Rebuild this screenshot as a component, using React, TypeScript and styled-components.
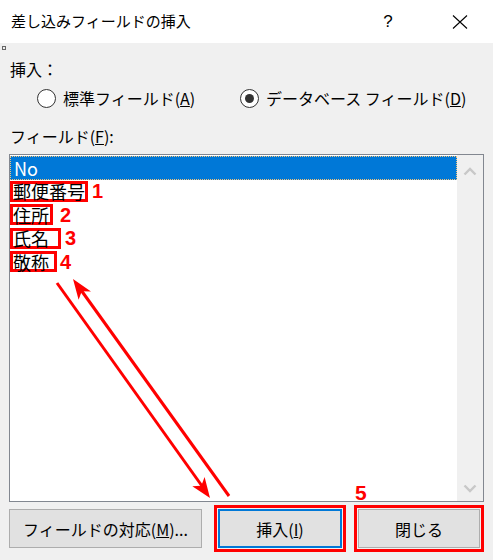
import React from 'react';
import styled, { createGlobalStyle } from 'styled-components';

const GlobalStyle = createGlobalStyle`
  html, body {
    margin: 0;
    padding: 0;
    background: #f0f0f0;
  }
  body {
    font-family: "Noto Sans CJK JP", "Noto Sans", sans-serif;
    color: #000000;
  }
`;

const fields = [
  { name: '郵便番号', num: '1', pad: 0, gap: 4 },
  { name: '住所', num: '2', pad: 1, gap: 7 },
  { name: '氏名', num: '3', pad: 9, gap: 4 },
  { name: '敬称', num: '4', pad: 5, gap: 3 },
];

export default function App() {
  return (
    <Window>
      <GlobalStyle />
      <TitleBar>
        <Title>差し込みフィールドの挿入</Title>
        <CaptionButton>?</CaptionButton>
        <CaptionButton>
          <svg width="16" height="14" viewBox="0 0 16 14">
            <path d="M1 0.5 L15 13.5 M15 0.5 L1 13.5" stroke="#000" strokeWidth="1.1" fill="none" />
          </svg>
        </CaptionButton>
      </TitleBar>

      <Content>
        <TinyDot />
        <Heading>挿入：</Heading>
        <RadioRow>
          <RadioOption width={203}>
            <RadioCircle />
            <span>
              標準フィールド(<u>A</u>)
            </span>
          </RadioOption>
          <RadioOption>
            <RadioCircle checked />
            <span>
              データベース フィールド(<u>D</u>)
            </span>
          </RadioOption>
        </RadioRow>

        <Heading>
          フィールド(<u>F</u>):
        </Heading>

        <ListBox>
          <Items>
            <Row selected>No</Row>
            {fields.map((f) => (
              <Row key={f.name}>
                <Mark pad={f.pad}>{f.name}</Mark>
                <Num gap={f.gap}>{f.num}</Num>
              </Row>
            ))}
          </Items>
          <ScrollBar>
            <svg width="14" height="9" viewBox="0 0 14 9">
              <path d="M1.5 7.5 L7 2 L12.5 7.5" stroke="#c8c8c8" strokeWidth="2.4" fill="none" />
            </svg>
            <svg width="14" height="9" viewBox="0 0 14 9">
              <path d="M1.5 1.5 L7 7 L12.5 1.5" stroke="#c8c8c8" strokeWidth="2.4" fill="none" />
            </svg>
          </ScrollBar>
        </ListBox>

        <ButtonRow>
          <Button width={194}>
            フィールドの対応(<u>M</u>)...
          </Button>
          <Highlight gap={12}>
            <Button width={124} primary>
              挿入(<u>I</u>)
            </Button>
          </Highlight>
          <Highlight gap={8}>
            <Button width={122}>閉じる</Button>
          </Highlight>
        </ButtonRow>
      </Content>

      <StepFive>5</StepFive>

      <Arrows width="493" height="560" viewBox="0 0 493 560">
        <line x1="57" y1="283" x2="202" y2="486" stroke="#ff0000" strokeWidth="3" />
        <polygon points="210,498 192.3,486.3 201.3,485.8 204.6,477.1" fill="#ff0000" />
        <line x1="229" y1="496" x2="81" y2="290" stroke="#ff0000" strokeWidth="3" />
        <polygon points="73,279 91,291.5 81.8,291.2 78.6,299.8" fill="#ff0000" />
      </Arrows>
    </Window>
  );
}

const Window = styled.div`
  position: relative;
  width: 493px;
  height: 560px;
  background: #f0f0f0;
  overflow: hidden;
`;

const TitleBar = styled.div`
  height: 43px;
  display: flex;
  align-items: center;
  padding: 0 10px 0 11px;
  background: #ffffff;
  box-sizing: border-box;
`;

const Title = styled.div`
  flex: 1;
  font-size: 15px;
  line-height: 20px;
  padding-bottom: 1px;
`;

const CaptionButton = styled.div`
  width: 46px;
  height: 43px;
  display: flex;
  align-items: center;
  justify-content: center;
  font-family: "Liberation Sans", sans-serif;
  font-size: 17px;
  & + & {
    margin-left: 26px;
  }
`;

const Content = styled.div`
  position: relative;
  display: flow-root;
  padding: 0 9px;
`;

const TinyDot = styled.div`
  position: absolute;
  left: 2px;
  top: 3px;
  width: 2px;
  height: 2px;
  border: 1px solid #666666;
`;

const Heading = styled.div`
  margin-top: 14px;
  height: 24px;
  padding-left: 1px;
  font-size: 16px;
  line-height: 24px;
`;

const RadioRow = styled.div`
  margin-top: 5px;
  height: 24px;
  padding-left: 28px;
  display: flex;
  align-items: center;
`;

const RadioOption = styled.label<{ width?: number }>`
  display: flex;
  align-items: center;
  gap: 7px;
  width: ${(p) => (p.width ? `${p.width}px` : 'auto')};
  font-size: 16px;
  line-height: 24px;
`;

const RadioCircle = styled.span<{ checked?: boolean }>`
  width: 19px;
  height: 19px;
  box-sizing: border-box;
  border: 1px solid #333333;
  border-radius: 50%;
  background: #ffffff;
  display: flex;
  align-items: center;
  justify-content: center;

  &::after {
    content: '';
    display: ${(p) => (p.checked ? 'block' : 'none')};
    width: 9px;
    height: 9px;
    border-radius: 50%;
    background: #333333;
  }
`;

const ListBox = styled.div`
  margin-top: 6px;
  width: 475px;
  height: 348px;
  box-sizing: border-box;
  border: 1px solid #828790;
  background: #ffffff;
  display: flex;
`;

const Items = styled.div`
  flex: 1;
  padding-top: 1px;
`;

const Row = styled.div<{ selected?: boolean }>`
  height: 23.5px;
  box-sizing: border-box;
  display: flex;
  align-items: center;
  padding-left: 3px;
  font-size: 18px;
  line-height: 1;
  color: ${(p) => (p.selected ? '#ffffff' : '#000000')};
  background: ${(p) => (p.selected ? '#0078d7' : 'transparent')};
  border: 1px dotted ${(p) => (p.selected ? '#f2c27a' : 'transparent')};
`;

const Mark = styled.span<{ pad: number }>`
  display: inline-flex;
  align-items: center;
  height: 21px;
  box-sizing: border-box;
  margin-left: -4px;
  padding-right: ${(p) => p.pad}px;
  border: 3px solid #ff0000;
`;

const Num = styled.span<{ gap: number }>`
  margin-left: ${(p) => p.gap}px;
  font-family: "Liberation Sans", Arial, sans-serif;
  font-weight: 700;
  font-size: 20px;
  color: #ff0000;
`;

const ScrollBar = styled.div`
  width: 26px;
  background: #f0f0f0;
  display: flex;
  flex-direction: column;
  align-items: center;
  justify-content: space-between;
  padding: 12px 0 8px;
  box-sizing: border-box;
`;

const ButtonRow = styled.div`
  margin-top: 3px;
  height: 47px;
  display: flex;
  align-items: center;
`;

const Highlight = styled.div<{ gap: number }>`
  margin-left: ${(p) => p.gap}px;
  border: 3px solid #ff0000;
  padding: 1px;
  display: flex;
`;

const Button = styled.button<{ width: number; primary?: boolean }>`
  width: ${(p) => p.width}px;
  height: 39px;
  box-sizing: border-box;
  background: #e1e1e1;
  border: ${(p) => (p.primary ? '2px solid #0078d7' : '1px solid #adadad')};
  font-family: "Noto Sans CJK JP", "Noto Sans", sans-serif;
  font-size: 16px;
  color: #000000;
  padding: 0;
`;

const StepFive = styled.div`
  position: absolute;
  left: 355px;
  top: 481px;
  font-family: "Liberation Sans", Arial, sans-serif;
  font-weight: 700;
  font-size: 21px;
  color: #ff0000;
`;

const Arrows = styled.svg`
  position: absolute;
  left: 0;
  top: 0;
  pointer-events: none;
`;
